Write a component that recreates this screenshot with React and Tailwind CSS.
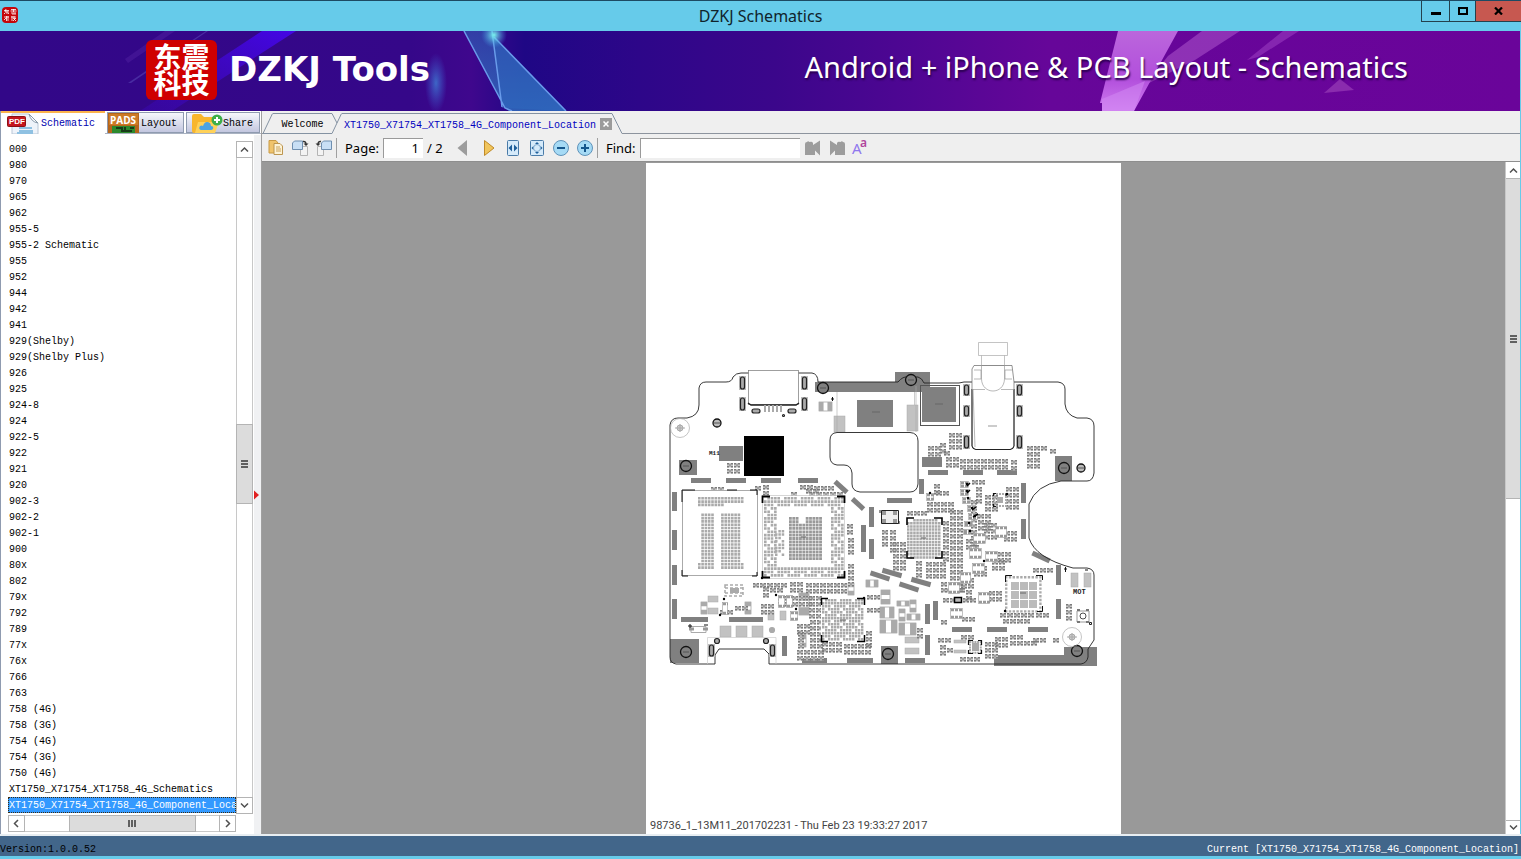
import React, { useState } from 'react';

const CURRENT = 'XT1750_X71754_XT1758_4G_Component_Location';

const models = [
  '000', '980', '970', '965', '962', '955-5', '955-2 Schematic', '955', '952', '944', '942', '941',
  '929(Shelby)', '929(Shelby Plus)', '926', '925', '924-8', '924', '922-5', '922', '921', '920',
  '902-3', '902-2', '902-1', '900', '80x', '802', '79x', '792', '789', '77x', '76x', '766', '763',
  '758 (4G)', '758 (3G)', '754 (4G)', '754 (3G)', '750 (4G)',
  'XT1750_X71754_XT1758_4G_Schematics', CURRENT
];

const mono = "font-['Liberation_Mono','Noto_Sans_CJK_SC',monospace] text-[10px]";

const Chevron = ({ d }) => (
  <svg width="9" height="9" viewBox="0 0 9 9" fill="none" stroke="#505050" strokeWidth="1.5">
    <path d={d} />
  </svg>
);

const UP = 'M1 6.5L4.5 3L8 6.5';
const DOWN = 'M1 2.5L4.5 6L8 2.5';
const LEFT = 'M6 1L2.5 4.5L6 8';
const RIGHT = 'M3 1L6.5 4.5L3 8';

const TitleBar = () => (
  <header className="relative flex h-[31px] shrink-0 items-center justify-center border-t border-[#1d4a63] bg-[#66cbea]">
    <div className="absolute left-0.5 top-1.5 grid h-4 w-4 grid-cols-2 place-items-center rounded-sm bg-[#c5060b]">
      <svg width="14" height="14" viewBox="0 0 14 14" className="col-span-2" fill="none" stroke="#fff" strokeWidth="0.8">
        <path d="M1 2.5h5M3 1L2 4h4M4 3v3M1 6l1-1M5 5l1 1M8 1.5h5M7.5 3h6M10.500 1v3M8 5h5M9 6h4M1 9h5M3.500 8v5M1 12l2-2M5 8v5M8 9h5M9 8v5M11 8v2M10 10.500h3M12 11l-2 2M11 11l2 2" />
      </svg>
    </div>
    <h1 className="text-[16px] leading-6 text-[#10242c]">DZKJ Schematics</h1>
    <div className="absolute right-0 top-0 flex h-[21px] border-b border-l border-[#24414d]">
      <button aria-label="Minimize" className="flex w-7 items-center justify-center border-r border-[#24414d]">
        <svg width="10" height="10" viewBox="0 0 10 10"><path d="M0 6h10v3H0z" /></svg>
      </button>
      <button aria-label="Maximize" className="flex w-[26px] items-center justify-center border-r border-[#24414d]">
        <svg width="10" height="8" viewBox="0 0 10 8" fill="none" stroke="#000" strokeWidth="2"><path d="M1 1h8v6H1z" /></svg>
      </button>
      <button aria-label="Close" className="flex w-[45px] items-center justify-center bg-[#c75850]">
        <svg width="9" height="8" viewBox="0 0 9 8" stroke="#000" strokeWidth="2.200"><path d="M1 0.500L8 7.500M8 0.500L1 7.500" /></svg>
      </button>
    </div>
  </header>
);

const BannerArt = () => (
  <svg className="absolute inset-0 h-full w-full" viewBox="0 0 1520 80" preserveAspectRatio="none">
    <defs>
      <linearGradient id="base">
        <stop offset="0" stopColor="#320788" />
        <stop offset="0.270" stopColor="#350789" />
        <stop offset="0.310" stopColor="#3f078d" />
        <stop offset="0.345" stopColor="#1f0785" />
        <stop offset="0.420" stopColor="#2d0689" />
        <stop offset="0.510" stopColor="#3b068b" />
        <stop offset="0.600" stopColor="#4f0693" />
        <stop offset="0.690" stopColor="#660699" />
        <stop offset="1" stopColor="#6a049a" />
      </linearGradient>
      <linearGradient id="ray" x1="0" y1="1" x2="1" y2="0">
        <stop offset="0" stopColor="#3e08c6" stopOpacity="0.300" />
        <stop offset="1" stopColor="#4406e6" />
      </linearGradient>
      <linearGradient id="glass" x1="0" y1="0" x2="0" y2="1">
        <stop offset="0" stopColor="#2f4fae" />
        <stop offset="1" stopColor="#3279c4" />
      </linearGradient>
      <linearGradient id="pink" x1="0" y1="0" x2="0" y2="1">
        <stop offset="0" stopColor="#bb66dc" />
        <stop offset="0.600" stopColor="#b24fdc" />
        <stop offset="1" stopColor="#cf7cf0" />
      </linearGradient>
      <radialGradient id="glow">
        <stop offset="0" stopColor="#3f8fe0" stopOpacity="0.700" />
        <stop offset="1" stopColor="#3f6fe0" stopOpacity="0" />
      </radialGradient>
      <radialGradient id="spark">
        <stop offset="0" stopColor="#7af5ee" />
        <stop offset="1" stopColor="#3f8fe0" stopOpacity="0" />
      </radialGradient>
    </defs>
    <rect width="1520" height="80" fill="url(#base)" />
    <path d="M140 80L262 0H296L172 80Z" fill="url(#ray)" />
    <path d="M128 52L206 0H208L131 52Z" fill="#6a62c8" opacity="0.400" />
    <path d="M125 28L165 0H175L128 32Z" fill="#4f1fa0" opacity="0.500" />
    <ellipse cx="436" cy="52" rx="11" ry="30" fill="url(#glow)" />
    <path d="M464 0L505 77L509 80H566L494 6L492 0Z" fill="url(#glass)" opacity="0.750" />
    <path d="M492 4L502 77L566 80Z" fill="#2f6cc0" opacity="0.450" />
    <path d="M464 0L505 77L512 80M492 0L502 76M494 6L566 80" fill="none" stroke="#699bea" strokeWidth="1.500" />
    <circle cx="494" cy="4" r="13" fill="url(#spark)" />
    <path d="M1168 25L1202 0H1240L1195 29L1145 54Z" fill="#a349c4" opacity="0.650" />
    <path d="M1247 29L1283 0H1299L1258 26Z" fill="#9a3bc0" opacity="0.600" />
    <path d="M1118 0H1178L1134 80H1102V72H1100Z" fill="url(#pink)" />
    <path d="M1102 68L1145 50L1134 80H1102Z" fill="#d48cf4" opacity="0.500" />
    <path d="M1324 62L1340 48L1354 59Z" fill="#8a2cae" />
  </svg>
);

const Banner = () => (
  <div className="relative mr-px flex h-20 shrink-0 items-center overflow-hidden">
    <BannerArt />
    <div className="relative ml-[146px] mb-0.5 flex h-[60px] w-[71px] items-center justify-center rounded-md bg-[#cf0000]">
      <div className="w-14 break-all pb-0.5 text-center font-['Noto_Sans_CJK_SC',sans-serif] text-[28px] font-bold leading-[26px] text-white">
        东震科技
      </div>
    </div>
    <div className="relative ml-3 whitespace-nowrap pb-1 font-['DejaVu_Sans',sans-serif] text-[34px] font-bold leading-9 text-white">DZKJ Tools</div>
    <div className="relative ml-auto mr-28 whitespace-nowrap pb-2 font-['Noto_Sans',sans-serif] text-[29px] leading-9 text-white [text-shadow:1px_2px_2px_#2a0050]">
      Android + iPhone &amp; PCB Layout - Schematics
    </div>
  </div>
);

const PdfIcon = () => (
  <svg width="32" height="21" viewBox="0 0 32 21">
    <path d="M5 1H22L31 10V21H5Z" fill="#eef3fa" stroke="#b9c6d6" />
    <path d="M22 1L31 10Q24 9 22 1" fill="#fff" stroke="#8899aa" />
    <path d="M12 15h13M12 18h14M10 20h16" stroke="#8fc1e2" strokeWidth="2" />
    <rect x="0.500" y="3.500" width="18" height="10" rx="1" fill="#c5161d" stroke="#8b1015" />
    <text x="2" y="11" fontSize="8" fontWeight="700" fill="#fff" fontFamily="Liberation Sans">PDF</text>
  </svg>
);

const PadsIcon = () => (
  <svg width="31" height="20" viewBox="0 0 31 20">
    <rect width="31" height="20" fill="#b5651a" />
    <rect x="1" y="1" width="29" height="11" fill="#cc7a25" />
    <text x="2" y="11" fontSize="10" fontWeight="700" fill="#fff" fontFamily="Open Sans">PADS</text>
    <rect x="4" y="13" width="23" height="7" fill="#2c8a2d" />
    <path d="M8 15h6v3h10M17 14v3M22 15h4" stroke="#173b18" strokeWidth="2" fill="none" />
  </svg>
);

const ShareIcon = () => (
  <svg width="32" height="20" viewBox="0 0 32 20">
    <path d="M1 3Q1 1 3 1H10L13 4H24V20H3Q1 20 1 18Z" fill="#f8b62d" />
    <path d="M4 20L7 9H28L24 20Z" fill="#ffd158" />
    <path d="M10 17Q7 16 9 13Q11 12 12 13Q14 7 19 10Q20 12 20 13Q23 13 22 16Q21 17 20 17Z" fill="#4ba3e3" />
    <circle cx="26" cy="7" r="5.500" fill="#3dae49" />
    <path d="M26 4v6M23 7h6" stroke="#fff" strokeWidth="2" />
  </svg>
);

const sideTab = 'flex h-[21px] items-center border border-[#8f9bb0] bg-gradient-to-b from-[#f6f7fc] to-[#c3c7df] text-black';

const SideTabs = () => (
  <div role="tablist" className={`flex h-[23px] items-end gap-0.5 border-b border-[#a9b2c2] ${mono}`}>
    <button role="tab" aria-selected="true" className="-mb-px flex h-[23px] w-[104px] items-center gap-0.5 border-t-2 border-[#fbb34c] bg-white pl-1.5 text-[#0000b0]">
      <PdfIcon />
      Schematic
    </button>
    <button role="tab" className={`${sideTab} w-[77px] gap-0.5`}>
      <PadsIcon />
      <span className="pt-0.5">Layout</span>
    </button>
    <button role="tab" className={`${sideTab} w-[74px] pl-1`}>
      <ShareIcon />
      <span className="pt-0.5">Share</span>
    </button>
  </div>
);

const scrollButton = 'flex shrink-0 items-center justify-center border border-[#b4b4b4] bg-white';

const Sidebar = ({ selected, onSelect }) => (
  <aside className="relative flex w-[261px] shrink-0 flex-col border-l border-[#8f9bb0] bg-white">
    <SideTabs />
    <div className="mr-2 mt-[7px] flex min-h-0 flex-1">
      <ul role="listbox" className={`ml-[7px] min-w-0 flex-1 overflow-hidden ${mono} leading-[18px]`}>
        {models.map((name) => (
          <li key={name} role="option" aria-selected={name === selected}>
            <button
              onClick={() => onSelect(name)}
              className={`block h-4 w-full overflow-hidden whitespace-nowrap text-left ${name === selected ? 'bg-[#3399ff] text-white outline-1 -outline-offset-1 outline-dotted outline-[#3b2c10]' : 'text-black'}`}
            >
              <span className="pl-px">{name}</span>
            </button>
          </li>
        ))}
      </ul>
      <div className="mb-[21px] flex w-[17px] shrink-0 flex-col border-x border-[#c8c8c8]">
        <button aria-label="Scroll up" className={`${scrollButton} -mx-px h-[17px]`}><Chevron d={UP} /></button>
        <div className="grow-[268] basis-0" />
        <div className="-mx-px flex grow-[78] basis-0 flex-col items-center justify-center gap-px border border-[#b4b4b4] bg-[#dcdcdc]">
          <i className="h-0.5 w-[7px] bg-[#606060]" />
          <i className="h-0.5 w-[7px] bg-[#606060]" />
          <i className="h-0.5 w-[7px] bg-[#606060]" />
        </div>
        <div className="grow-[295] basis-0" />
        <button aria-label="Scroll down" className={`${scrollButton} -mx-px h-[17px]`}><Chevron d={DOWN} /></button>
      </div>
    </div>
    <div className="-mt-5 mb-0.5 ml-[7px] mr-[25px] flex h-[17px] shrink-0 border-y border-[#c8c8c8] bg-white">
      <button aria-label="Scroll left" className={`${scrollButton} -my-px w-[17px]`}><Chevron d={LEFT} /></button>
      <div className="grow-[46] basis-0" />
      <div className="-my-px flex grow-[132] basis-0 items-center justify-center gap-px border border-[#b4b4b4] bg-[#dcdcdc]">
        <i className="h-[7px] w-0.5 bg-[#606060]" />
        <i className="h-[7px] w-0.5 bg-[#606060]" />
        <i className="h-[7px] w-0.5 bg-[#606060]" />
      </div>
      <div className="grow-[24] basis-0" />
      <button aria-label="Scroll right" className={`${scrollButton} -my-px w-[17px]`}><Chevron d={RIGHT} /></button>
    </div>
    {/* splitter handle */}
    <div className="absolute bottom-0 right-0 top-6 flex w-[7px] items-center bg-[#f0f1f3]">
      <svg width="6" height="10" viewBox="0 0 6 10" className="mt-5"><path d="M0 0.500L5 5L0 9.500Z" fill="#e02020" /></svg>
    </div>
  </aside>
);

const DocTabs = () => (
  <div role="tablist" className={`flex h-[23px] items-end ${mono}`}>
    <div className="h-full w-px border-b border-[#8d949e]" />
    <svg width="10" height="21" viewBox="0 0 10 21" fill="none" stroke="#8492a2"><path d="M0 20.500L9.500 0.500" /><path d="M0 20.500H10" /></svg>
    <button role="tab" className="h-[21px] w-[59px] border-y border-[#8492a2] pt-0.5 text-center text-black">Welcome</button>
    <svg width="10" height="21" viewBox="0 0 10 21" fill="none" stroke="#8492a2"><path d="M0 0.500L5 10M0 20.500L9.500 0.500" /></svg>
    <div className="flex h-[21px] items-center border-t border-[#8492a2]">
      <button role="tab" aria-selected="true" className="pl-0.5 pt-0.5 text-[#0000c0]">{CURRENT}</button>
      <button aria-label="Close tab" className="ml-1 flex h-3 w-3 items-center justify-center bg-[#9b9b9b]">
        <svg width="6" height="6" viewBox="0 0 6 6" stroke="#fff" strokeWidth="1.500"><path d="M0.500 0.500L5.500 5.500M5.500 0.500L0.500 5.500" /></svg>
      </button>
    </div>
    <svg width="10" height="21" viewBox="0 0 10 21" fill="none" stroke="#8492a2"><path d="M0 0.500L10 20.500" /></svg>
    <div className="h-full flex-1 border-b border-[#8d949e]" />
  </div>
);

const IconButton = ({ label, children }) => (
  <button aria-label={label} className="flex h-6 w-6 shrink-0 items-center justify-center">
    <svg width="18" height="18" viewBox="0 0 18 18" className="overflow-visible">{children}</svg>
  </button>
);

const Toolbar = () => {
  const [page, setPage] = useState('1');
  const [find, setFind] = useState('');
  return (
    <div className="flex h-7 items-center border-b border-[#8e8e8e] pl-0.5 font-['Noto_Sans',sans-serif] text-[13px] text-black">
      <IconButton label="Copy">
        <path d="M2 1.500H9L11 4V14H2Z" fill="#f0c46c" stroke="#c99a45" />
        <path d="M7 4.500H13L15.500 7V15.500H7Z" fill="#fdf3d6" stroke="#bd9650" />
        <path d="M9 8h4M9 10h5M9 12h5" stroke="#c9a25b" />
      </IconButton>
      <IconButton label="Rotate right">
        <path d="M9.500 7.500H16.500V16.500H9.500Z" fill="#f3f3f3" stroke="#b4b4b4" />
        <path d="M3.500 2H11.500V10.500H1.500V4Z" fill="#c8dff5" stroke="#6f8fb0" />
        <path d="M12 2.500Q15 2 15 5.500" fill="none" stroke="#333" strokeWidth="1.500" /><path d="M12.500 4.500h5L15 7Z" fill="#333" />
      </IconButton>
      <IconButton label="Rotate left">
        <path d="M2.500 7.500H8.500V16.500H2.500Z" fill="#f3f3f3" stroke="#b4b4b4" />
        <path d="M8.500 2H16.500V10.500H6.500V4Z" fill="#c8dff5" stroke="#6f8fb0" />
        <path d="M6 2.500Q3 2 3 5.500" fill="none" stroke="#333" strokeWidth="1.500" /><path d="M0.500 4.500h5L3 7Z" fill="#333" />
      </IconButton>
      <div className="mr-2 h-5 w-px bg-[#a0a0a0]" />
      <label htmlFor="page" className="pt-0.5">Page:</label>
      <input
        id="page"
        value={page}
        onChange={(e) => setPage(e.target.value)}
        className="ml-1 h-5 w-10 border-l border-t border-[#9a9a9a] bg-white pr-1 text-right outline-none"
      />
      <span className="ml-1 w-6 whitespace-nowrap pt-0.5">/ 2</span>
      <IconButton label="Previous page"><path d="M13 1V17L3.500 9Z" fill="#9c9c9c" /></IconButton>
      <div className="w-0.5" />
      <IconButton label="Next page"><path d="M4.500 1.500V16.500L14 9Z" fill="#f1c55c" stroke="#c08a28" /></IconButton>
      <IconButton label="Fit width">
        <rect x="3.500" y="1.500" width="11" height="15" rx="1" fill="#d5eafa" stroke="#4a7ba8" />
        <path d="M8 5.500V12.500L4.500 9ZM10 5.500V12.500L13.500 9Z" fill="#1f5f9a" />
      </IconButton>
      <IconButton label="Fit page">
        <rect x="2.500" y="1.500" width="13" height="15" rx="1" fill="#d5eafa" stroke="#4a7ba8" />
        <path d="M7 5h4L9 3ZM7 13h4L9 15ZM5.500 7v4L3.500 9ZM12.500 7v4L14.500 9Z" fill="#1f5f9a" />
        <circle cx="9" cy="9" r="3.500" fill="none" stroke="#7fa8cc" />
      </IconButton>
      <IconButton label="Zoom out">
        <circle cx="9" cy="9" r="7.500" fill="#a5daf5" stroke="#5f93ba" />
        <path d="M5 9h8" stroke="#14568c" strokeWidth="2" />
      </IconButton>
      <IconButton label="Zoom in">
        <circle cx="9" cy="9" r="7.500" fill="#a5daf5" stroke="#5f93ba" />
        <path d="M5 9h8M9 5v8" stroke="#14568c" strokeWidth="2" />
      </IconButton>
      <div className="mr-2 h-5 w-px bg-[#a0a0a0]" />
      <label htmlFor="find" className="pt-0.5">Find:</label>
      <input
        id="find"
        value={find}
        onChange={(e) => setFind(e.target.value)}
        className="ml-1 mr-px h-5 w-40 border-l border-t border-[#9a9a9a] bg-white outline-none"
      />
      <IconButton label="Find previous"><path d="M1 5Q1 3 3 3Q4 1.500 5.500 3Q8 2 9 4V6L16 1.500V16.500L11 11.500V16H1Z" fill="#9c9c9c" /></IconButton>
      <IconButton label="Find next"><path d="M17 5Q17 3 15 3Q14 1.500 12.500 3Q10 2 9 4V6L2 1.500V16.500L7 11.500V16H17Z" fill="#9c9c9c" /></IconButton>
      <IconButton label="Match case">
        <text x="0" y="15" fontSize="15" fill="#8f78ee" fontFamily="Noto Sans">A</text>
        <text x="8" y="8" fontSize="12" fontWeight="600" fill="#b0459c" fontFamily="Noto Sans">a</text>
      </IconButton>
    </div>
  );
};

/* ---- board drawing, in page units ---- */

const cells = (x, y, cols, rows, pitch, size, keep = () => true) => {
  let d = '';
  for (let r = 0; r < rows; r++) {
    for (let c = 0; c < cols; c++) {
      if (keep(c, r)) d += `M${x + c * pitch} ${y + r * pitch}h${size}v${size}h-${size}z`;
    }
  }
  return d;
};

const noise = (c, r) => (c * 7 + r * 13 + c * r * 3) % 5;

// two-pad parts laid side by side: x, y, columns, rows
const chips = [
  [711, 487, 2, 1], [755, 486, 1, 1], [763, 485, 1, 2], [800, 485, 2, 1], [806, 489, 2, 1], [814, 486, 3, 1], [727, 463, 2, 2], [791, 492, 1, 1],
  [809, 492, 5, 1], [847, 524, 1, 2], [848, 538, 1, 3], [848, 564, 1, 4], [753, 583, 5, 1], [770, 588, 2, 1], [790, 582, 2, 2],
  [806, 583, 6, 2], [761, 604, 2, 2], [778, 596, 5, 2], [797, 624, 2, 2], [809, 596, 2, 4], [797, 650, 4, 2],
  [810, 620, 2, 5], [798, 632, 1, 3], [822, 642, 3, 2], [844, 644, 4, 2], [867, 595, 2, 1], [867, 608, 2, 1], [866, 631, 1, 3],
  [720, 610, 2, 1], [735, 606, 2, 1], [763, 587, 1, 2],
  [949, 433, 2, 3], [940, 443, 1, 2], [928, 446, 2, 2], [944, 451, 1, 1], [946, 457, 2, 2],
  [960, 459, 7, 2], [1011, 460, 1, 2], [1027, 446, 3, 1], [1027, 452, 2, 1], [1027, 458, 2, 2], [1050, 449, 1, 1],
  [934, 484, 1, 2], [927, 502, 4, 2], [907, 511, 3, 1], [936, 491, 2, 1], [972, 480, 2, 1], [976, 487, 1, 3],
  [985, 495, 2, 3], [1006, 487, 2, 4], [971, 500, 1, 8], [978, 514, 2, 3],
  [950, 510, 2, 14], [943, 521, 1, 7],
  [882, 530, 1, 3], [890, 530, 1, 4], [893, 542, 2, 3], [893, 560, 2, 2], [916, 561, 1, 3], [926, 562, 3, 3],
  [984, 523, 2, 3], [1004, 531, 2, 2], [992, 560, 2, 2], [998, 552, 2, 2], [966, 539, 2, 2],
  [974, 566, 2, 2], [961, 578, 2, 2], [945, 588, 3, 1], [943, 598, 2, 1], [963, 598, 2, 1], [966, 590, 1, 2], [941, 582, 1, 2],
  [962, 617, 2, 1], [941, 620, 1, 1], [1033, 568, 3, 1], [1000, 613, 5, 1], [1003, 619, 4, 1],
  [1036, 613, 2, 1], [1066, 604, 1, 3], [995, 637, 2, 2], [1010, 635, 2, 2], [1024, 641, 2, 1], [1033, 638, 2, 1], [938, 638, 2, 1],
  [940, 645, 1, 2], [947, 648, 1, 1], [961, 635, 2, 1], [960, 657, 3, 1], [985, 642, 2, 3], [1053, 638, 1, 1], [917, 628, 1, 2],
  [989, 591, 2, 2]
];

const chipRun = (draw) =>
  chips
    .map(([x, y, cols, rows]) => {
      let d = '';
      for (let r = 0; r < rows; r++) {
        for (let c = 0; c < cols; c++) d += draw(x + c * 7, y + r * 6);
      }
      return d;
    })
    .join('');

const chipBodies = chipRun((x, y) => `M${x} ${y}h6v4.400h-6z`);
const chipPads = chipRun((x, y) => `M${x} ${y}h2v1.500h-2zM${x + 4} ${y}h2v1.500h-2zM${x} ${y + 3}h2v1.400h-2zM${x + 4} ${y + 3}h2v1.400h-2zM${x + 2.5} ${y + 1}h1v2.500h-1z`);

// solid shield clips and marks: x, y, w, h
const clips = [
  [691, 478, 20, 5], [726, 478, 20, 5], [761, 478, 20, 5], [798, 478, 20, 5], [672, 492, 5, 19], [672, 530, 5, 20],
  [672, 565, 5, 20], [672, 599, 5, 20], [681, 617, 27, 5], [729, 617, 34, 5], [782, 636, 5, 20], [802, 658, 25, 5], [847, 658, 26, 5],
  [869, 507, 5, 20], [861, 525, 5, 27], [869, 539, 5, 20], [928, 470, 20, 5], [963, 470, 20, 5], [997, 470, 20, 5],
  [919, 479, 5, 15], [887, 498, 25, 5], [1021, 483, 5, 20], [1021, 519, 5, 20], [1056, 565, 5, 20], [1056, 599, 5, 20],
  [925, 604, 5, 20], [933, 601, 5, 19], [925, 635, 5, 20], [905, 658, 20, 5], [952, 627, 20, 5], [987, 627, 20, 5], [1028, 627, 20, 5],
  [679, 460, 18, 15], [719, 446, 24, 15], [670, 639, 29, 24], [881, 646, 17, 18], [1055, 456, 17, 25],
  [922, 457, 20, 10], [857, 400, 36, 27], [922, 387, 34, 35], [815, 382, 110, 10], [895, 372, 35, 18],
  [994, 655, 103, 11], [1064, 647, 33, 12]
];

const slanted = [
  [841, 487, 16, 5, 42], [858, 504, 15, 5, 42], [880, 576, 20, 5, 18], [892, 573, 20, 5, 16],
  [909, 587, 20, 5, 18], [921, 582, 20, 5, 16], [1041, 557, 19, 5, 25]
];

const screws = [
  [823, 388, 5.5], [911, 380, 5.5], [717, 423, 4], [686, 466, 5.5], [1064, 468, 5.5], [1081, 468, 4], [686, 652, 5.5],
  [888, 654, 5.5], [1077, 651, 5.5]
];

const slots = [
  [740, 377, 12], [740, 398, 12], [802, 377, 12], [802, 398, 12], [964, 385, 10], [964, 406, 10], [964, 436, 12],
  [1017, 385, 10], [1017, 406, 10], [1017, 436, 12], [709, 645, 11], [770, 645, 11]
];

// small packages with a pin-one dot
const packages = [
  [960, 481, 8, 6], [960, 489, 8, 6], [962, 497, 8, 6], [967, 505, 8, 6], [968, 513, 9, 6], [964, 521, 8, 5], [963, 529, 7, 5],
  [973, 533, 12, 10], [995, 526, 11, 11], [969, 548, 12, 10], [985, 551, 12, 10], [972, 563, 12, 10], [960, 572, 10, 11],
  [948, 582, 11, 11], [978, 592, 11, 11], [950, 608, 12, 10], [926, 493, 7, 7], [778, 595, 6, 12], [786, 595, 6, 12], [790, 611, 7, 9], [722, 602, 5, 12]
];

const blocks = [
  [834, 416, 11, 16], [907, 405, 11, 26], [720, 626, 11, 11], [736, 626, 11, 11], [752, 626, 11, 11], [708, 596, 10, 6], [708, 608, 10, 6],
  [768, 611, 6, 9], [780, 611, 6, 9], [905, 637, 14, 6], [905, 648, 14, 6],
  [1071, 573, 7, 14], [1084, 573, 7, 14], [954, 640, 12, 3], [954, 650, 12, 3]
];

// passives with a pad at each end: x, y, w, h, upright
const passives = [
  [881, 590, 9, 14, 1], [880, 607, 14, 11, 0], [880, 620, 17, 13, 0], [899, 623, 17, 12, 0], [897, 601, 12, 5, 0], [899, 609, 6, 12, 1],
  [910, 600, 6, 12, 1], [907, 614, 13, 6, 0], [799, 593, 10, 22, 1], [701, 602, 6, 12, 1], [745, 602, 6, 12, 1], [848, 583, 6, 12, 1],
  [800, 635, 6, 12, 1], [819, 402, 13, 9, 0], [866, 580, 12, 7, 0]
];

const OUTLINE =
  'M676 664Q670 663 670 657V425Q671 418 678 418H687Q699 416 699 405V388Q700 382 706 382H726Q732 382 733 377Q736 373 741 373H812Q818 374 818 382H898Q903 376 908 377H918Q922 378 924 383H959L964 382H1058Q1065 383 1065 389V404Q1066 415 1077 418H1087Q1094 419 1094 426V473Q1093 481 1087 481H1061Q1036 485 1029 504V538Q1035 558 1073 568H1087Q1094 569 1094 575V640L1088 649V657Q1087 663 1081 664H769V654L764 649H719L715 655V664Z';

const Board = () => (
  <svg viewBox="0 0 475 671" className="w-full" role="img" aria-label="Component location drawing">
    <g transform="translate(-646 -163)">
      <g fill="#808080">
        {clips.map(([x, y, w, h]) => <rect key={`${x}-${y}`} x={x} y={y} width={w} height={h} />)}
        {slanted.map(([x, y, w, h, a]) => (
          <rect key={`${x}-${y}`} x={x - w / 2} y={y - h / 2} width={w} height={h} transform={`rotate(${a} ${x} ${y})`} />
        ))}
      </g>
      <g fill="#c2c2c2" stroke="#aaa" strokeWidth="0.5">
        {blocks.map(([x, y, w, h]) => <rect key={`${x}-${y}`} x={x} y={y} width={w} height={h} />)}
      </g>
      {passives.map(([x, y, w, h, upright]) => (
        <g key={`${x}-${y}`}>
          <rect x={x} y={y} width={w} height={h} fill="#fff" stroke="#888" strokeWidth="0.600" />
          {upright
            ? <path d={`M${x} ${y}h${w}v${h * 0.35}h-${w}zM${x} ${y + h * 0.65}h${w}v${h * 0.35}h-${w}z`} fill="#aaa" />
            : <path d={`M${x} ${y}h${w * 0.35}v${h}h-${w * 0.35}zM${x + w * 0.65} ${y}h${w * 0.35}v${h}h-${w * 0.35}z`} fill="#aaa" />}
        </g>
      ))}
      <path d={chipBodies} fill="#c6c6c6" />
      <path d={chipPads} fill="#7c7c7c" />
      <path d={OUTLINE} fill="none" stroke="#222" strokeWidth="0.900" />
      <path d="M837 432.500H910Q918 433 918 441V484Q917 492 910 492H860Q852 491 852 484V473Q851 465 844 465H837Q830 464 830 457V440Q830 433 837 432.500Z" fill="#fff" stroke="#222" strokeWidth="0.900" />
      {/* connectors */}
      <rect x="748.500" y="370.500" width="50" height="34" fill="#fff" stroke="#777" strokeWidth="0.700" />
      <path d="M748 403l3 2h45l3-2" fill="none" stroke="#222" strokeWidth="1.500" />
      <path d="M837 392V432M914.500 392V405M916 386V432" fill="none" stroke="#aaa" strokeWidth="0.600" />
      <rect x="920.500" y="385.500" width="39" height="40" fill="none" stroke="#555" />
      <path d="M978.500 342.500h29v13h-29zM981.500 355.500v10h23v-10" fill="none" stroke="#aaa" strokeWidth="0.700" />
      <path d="M972 389h43v56q0 5-4 5h-35q-4 0-4-5z" fill="#fff" />
      <path d="M974 365.500H1012L1014 382V446L1011 449.500H975L972 446V369Z" fill="#fff" stroke="#666" strokeWidth="0.700" />
      <path d="M972 389V446Q972 449 976 449.500H1010Q1014 449 1014 446V389" fill="none" stroke="#222" />
      <path d="M972 389.500H985M1001 389.500H1014M974 370h7v9h-7M1012 370h-7v9h7M981.500 365V379C982 395 1004 395 1004.500 379V365M975 447L973 389" fill="none" stroke="#999" strokeWidth="0.700" />
      <path d="M988 426h9" stroke="#999" />
      <path d="M765 405v7M769 405v7M773 405v7M777 405v7M781 405v7" stroke="#aaa" strokeWidth="2" />
      <g fill="#aaa" stroke="#222" strokeWidth="1.200">
        {slots.map(([x, y, h]) => (
          <g key={`${x}-${y}`}>
            <rect x={x - 1} y={y - 1} width="7" height={h + 2} fill="#bbb" stroke="none" />
            <rect x={x + 0.5} y={y} width="4" height={h} rx="2" />
          </g>
        ))}
        <rect x="752" y="409" width="8" height="4" rx="2" />
        <rect x="788" y="409" width="8" height="4" rx="2" />
        <circle cx="717" cy="641" r="2.500" />
        <circle cx="766" cy="641" r="2.500" />
        <circle cx="772" cy="630" r="2.500" stroke="#aaa" />
        <circle cx="783.500" cy="415.500" r="1" fill="none" />
      </g>
      <g fill="#777" stroke="#111" strokeWidth="1.300">
        {screws.map(([x, y, r]) => (
          <g key={`${x}-${y}`}>
            <circle cx={x} cy={y} r={r} fill={r < 5 ? '#bbb' : '#808080'} />
            <path d={`M${x - 3} ${y}h6`} stroke="#555" strokeWidth="1" />
          </g>
        ))}
      </g>
      {[[680, 428], [1072, 637]].map(([x, y]) => (
        <g key={x} fill="none" stroke="#aaa"><circle cx={x} cy={y} r="9.5" strokeWidth="0.700" /><circle cx={x} cy={y} r="3" fill="#ccc" /><path d={`M${x - 5} ${y}h10M${x} ${y - 4}v8`} /></g>
      ))}
      <rect x="744" y="436" width="40" height="40" />
      {/* memory */}
      <rect x="682.500" y="490.500" width="75" height="85" fill="#fff" stroke="#aaa" />
      <path d="M682 502V490H695M750 490H757V495M682 570V576H688M752 576H757V572M727 490H737" fill="none" stroke="#111" />
      <path
        d={cells(698, 497, 14, 22, 3.3, 2.6, (c, r) => r < 2 || (r === 2 && c < 8) || (r > 4 && r < 20 && c > 0 && c < 13 && c !== 5 && c !== 6) || (r > 19 && c !== 5 && c !== 6)) }
        fill="#aaa"
      />
      {/* processor */}
      <rect x="762.500" y="495.500" width="82" height="83" fill="#fff" stroke="#bbb" strokeWidth="0.600" />
      <path d={cells(764, 497, 24, 24, 3.35, 2.6, (c, r) => (c < 4 || c > 19 || r < 3 || r > 20) && noise(c, r) > 0)} fill="#aaa" />
      <path d={cells(789, 517, 10, 13, 3.35, 2.8, (c, r) => r > 1 || c < 3 || c > 4)} fill="#999" />
      <path d={cells(775, 530, 3, 8, 3.35, 2.5, (c, r) => (c + r) % 4 > 0)} fill="#aaa" />
      <path d="M762.500 503V496.500H770M837 496.500H844.500V503M762.500 571V577.500H770M837 577.500H844.500V571" fill="none" stroke="#000" strokeWidth="1.800" />
      {/* power management */}
      <rect x="906" y="518" width="36" height="41" fill="#fff" />
      <path d={cells(907, 519, 11, 13, 3.1, 2.5, (c, r) => (c > 1 && c < 9) || (r > 1 && r < 11) || noise(c, r) > 2)} fill="#aaa" />
      <path d="M907 525V518H914M934 518H942V525M907 551V558H914M935 558H942V551" fill="none" stroke="#000" strokeWidth="1.600" />
      <rect x="821" y="598" width="44" height="44" fill="#fff" />
      <path d={cells(822, 599, 14, 14, 3, 2.4, (c, r) => noise(c, r) > 0)} fill="#aaa" />
      <path d="M821.500 605V598.500H828M857 598.500H864.500V605M821.500 635V641.500H828M857 641.500H864.500V635" fill="none" stroke="#000" strokeWidth="1.500" />
      {/* charger */}
      <path d={cells(1011, 582, 3, 3, 9, 8)} fill="#bbb" />
      <path d={cells(1005, 576, 10, 10, 3.8, 2.4, (c, r) => c === 0 || c === 9 || r === 0 || r === 9)} fill="#aaa" />
      <path d="M1005.500 582V575.500H1012M1036 575.500H1042.500V580M1042.500 606V611.500H1037M1005 610h1" fill="none" stroke="#111" />
      <g fill="#aaa">
        <rect x="997" y="497" width="6" height="6" /><rect x="972" y="643" width="7" height="8" />
        <path d={cells(993, 493, 5, 5, 3, 2, (c, r) => c % 4 === 0 || r % 4 === 0)} />
        <path d={cells(969, 641, 5, 5, 2.7, 2, (c, r) => c % 4 === 0 || r % 4 === 0)} />
      </g>
      <path d="M993.500 496V493.500H996M1006 493.500V496M993.500 504V506.500H996M968.500 645V640.500H973M978 640.500H981.500V645M968.500 650V653.500H973M981.500 650V653.500H978" fill="none" stroke="#111" strokeWidth="1.200" />
      <path d="M881.500 510.500h17v13h-17zM880 510v3M899 521v3" fill="#eee" stroke="#222" />
      <path d="M882 511h4v4h-4zM893 511h4v4h-4zM882 519h4v4h-4zM893 519h4v4h-4z" fill="#999" />
      {packages.map(([x, y, w, h]) => (
        <g key={`${x}-${y}`} fill="#fff" stroke="#999">
          <rect x={x + 0.5} y={y + 0.5} width={w} height={h} strokeWidth="0.600" />
          <path d={`M${x + 1} ${y + 2}h${w}M${x + 1} ${y + h - 1}h${w}`} strokeWidth="2.500" strokeDasharray="3 1" />
        </g>
      ))}
      <g>
        {[[967, 484], [967, 491], [968, 498], [972, 508], [975, 516], [969, 523], [970, 531], [930, 493], [762, 578], [864, 598], [724, 599], [1005, 611], [1007, 494], [796, 609], [776, 595], [984, 561], [720, 615]].map(([x, y]) => (
          <circle key={`${x}-${y}`} cx={x} cy={y} r="1.2" />
        ))}
        <path d="M967 486l3-3M967 493l3-3M972 510l4-3M973 517l5-3" stroke="#000" strokeWidth="1.500" />
      </g>
      <rect x="954.500" y="597.500" width="7" height="5" fill="#bbb" stroke="#000" strokeWidth="1.500" />
      <path d="M725 585h18v11h-18zM725 588h18M725 593h18" fill="none" stroke="#aaa" strokeWidth="1.500" strokeDasharray="3 2" />
      <rect x="730" y="588" width="9" height="5" fill="#aaa" />
      <path d="M691 626.500h15v6h-15z" fill="none" stroke="#aaa" /><path d="M689 629h5M703 629h5" stroke="#999" strokeWidth="3" />
      <path d="M688 626h4M690 624v4M704 625h4M831 399h3M832.500 397v4M1064 569h3M1065.500 567v5M1085 570h3" stroke="#111" fill="none" />
      <path d="M1077 611h12v11h-12z" fill="none" stroke="#999" /><path d="M1077 610h3M1086 610h3M1077 622h3M1086 622h3" stroke="#777" strokeWidth="2" />
      <circle cx="1083" cy="616" r="3" fill="#fff" stroke="#222" strokeWidth="0.800" />
      <path d="M1089.500 622.500h2v2h-2z" fill="none" stroke="#222" />
      <path d="M707.500 664V637.500H776V664" fill="none" stroke="#ccc" strokeWidth="0.700" />
      <g fontFamily="Liberation Mono" fontWeight="700" fill="#222">
        <text x="709" y="455" fontSize="6">M11</text>
        <text x="1073" y="594" fontSize="7">MOT</text>
      </g>
      <path d="M872 412h8M935 404h8M801 537h5M921 538h5M1020 593h6M840 620h6" stroke="#666" />
    </g>
  </svg>
);

const Viewer = () => (
  <div className="flex min-h-0 flex-1 bg-[#999]">
    <div className="flex min-w-0 flex-1 justify-center overflow-hidden pt-px">
      <div className="relative flex w-[475px] shrink-0 flex-col self-stretch bg-white">
        <Board />
        <p className="absolute bottom-0.5 left-1 whitespace-nowrap font-['Roboto',sans-serif] text-[11px] leading-3 text-[#444]">
          98736_1_13M11_201702231 - Thu Feb 23 19:33:27 2017
        </p>
      </div>
    </div>
    <div className="flex w-[15px] shrink-0 flex-col border-l border-[#c8c8c8] bg-white">
      <button aria-label="Page up" className="flex h-4 items-center justify-center bg-white"><Chevron d={UP} /></button>
      <div className="flex grow-[320] basis-0 flex-col items-center justify-center gap-px border-y border-[#b4b4b4] bg-[#dcdcdc]">
        <i className="h-0.5 w-[7px] bg-[#606060]" />
        <i className="h-0.5 w-[7px] bg-[#606060]" />
        <i className="h-0.5 w-[7px] bg-[#606060]" />
      </div>
      <div className="grow-[322] basis-0" />
      <button aria-label="Page down" className="flex h-3.5 items-center justify-center border-t border-[#b4b4b4] bg-white"><Chevron d={DOWN} /></button>
    </div>
  </div>
);

const App = () => {
  const [selected, setSelected] = useState(CURRENT);
  return (
    <div className="flex h-screen flex-col overflow-hidden bg-[#66cbea] font-['Noto_Sans',sans-serif]">
      <TitleBar />
      <Banner />
      <main className="mr-px flex min-h-0 flex-1 bg-[#efefef]">
        <Sidebar selected={selected} onSelect={setSelected} />
        <section className="flex min-w-0 flex-1 flex-col border-l border-[#a0a0a0]">
          <DocTabs />
          <Toolbar />
          <Viewer />
        </section>
      </main>
      <footer className={`mb-[3px] flex h-[22px] shrink-0 items-center justify-between border-t-2 border-[#e8eef2] bg-[#42668a] pt-1.5 ${mono}`}>
        <span className="text-black">Version:1.0.0.52</span>
        <span className="pr-0.5 text-white">Current [{CURRENT}]</span>
      </footer>
    </div>
  );
};

export default App;
